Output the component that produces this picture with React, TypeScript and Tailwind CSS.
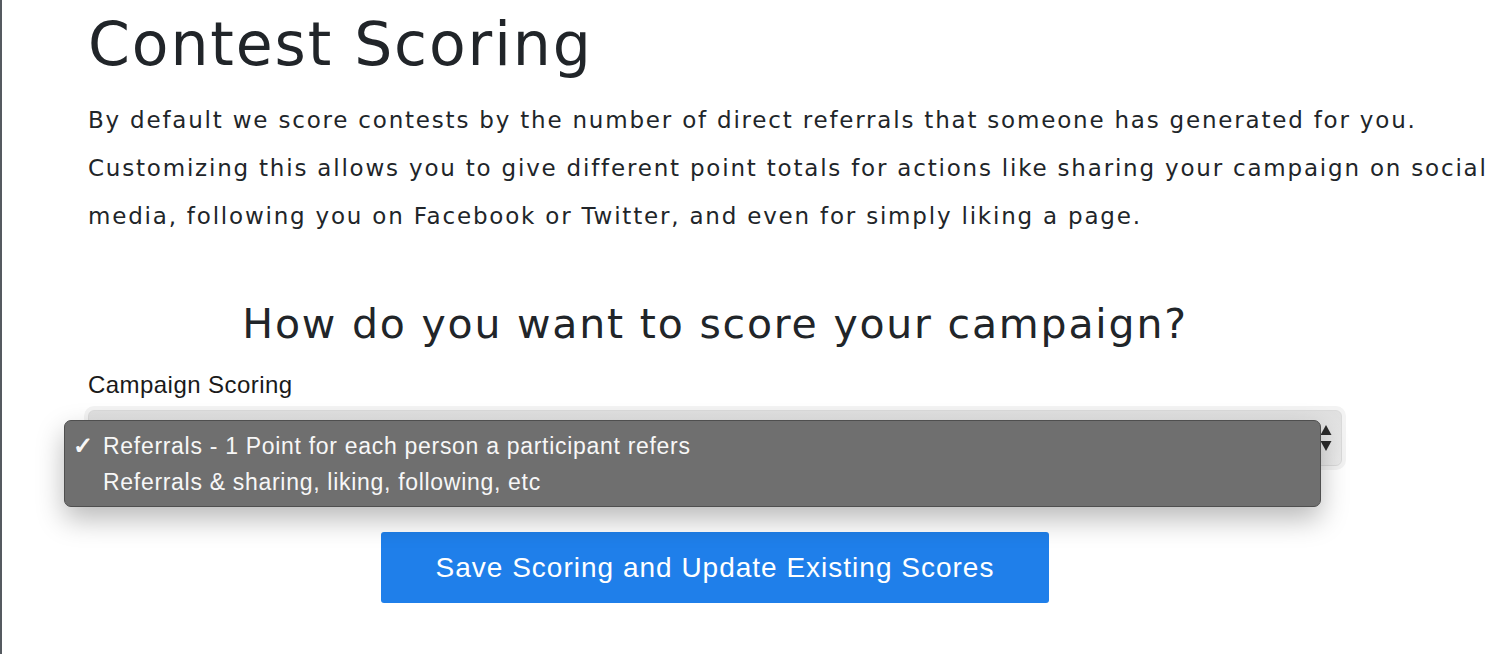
import * as React from 'react';

const options = [
  {label: 'Referrals - 1 Point for each person a participant refers', checked: true},
  {label: 'Referrals & sharing, liking, following, etc', checked: false},
];

function SelectArrows() {
  return (
    <svg width="12" height="28" viewBox="0 0 12 28" className="text-[#2b2b2b]">
      <path d="M6 1 L11.5 11 L0.5 11 Z" fill="currentColor"/>
      <path d="M6 27 L11.5 17 L0.5 17 Z" fill="currentColor"/>
    </svg>
  );
}

export default function App() {
  return (
    <div className="min-h-[654px] w-full bg-white border-l-2 border-[#555a60] overflow-hidden">
      <div className="pl-[86px]">
        <h1
          className="mt-[8px] text-[60px] leading-[72px] tracking-[1.9px] text-[#212529] font-['DejaVu_Sans',sans-serif]">
          Contest Scoring
        </h1>
        <p className="mt-[16px] text-[23px] leading-[48px] tracking-[1.8px] text-[#212529] font-['DejaVu_Sans',sans-serif] whitespace-nowrap">
          <span className="block">By default we score contests by the number of direct referrals that someone has generated for you.</span>
          <span className="block">Customizing this allows you to give different point totals for actions like sharing your campaign on social</span>
          <span className="block">media, following you on Facebook or Twitter, and even for simply liking a page.</span>
        </p>

        <div className="w-[1254px]">
          <h2 className="mt-[60px] text-center text-[41px] leading-[48px] tracking-[1.8px] text-[#212529] font-['DejaVu_Sans',sans-serif]">
            How do you want to score your campaign?
          </h2>
          <label className="block mt-[19px] text-[24px] leading-[36px] tracking-[0.45px] text-[#1a1a1a] font-['Liberation_Sans',Arial,sans-serif]">
            Campaign Scoring
          </label>

          <div className="relative mt-[7px] h-[56px] rounded-[6px] bg-gradient-to-b from-[#e0e0e0] to-[#ebebeb] border border-[#dadada] ring-4 ring-[#f3f3f3] flex items-center justify-end pr-[9px]">
            <SelectArrows/>
            <div
              className="absolute left-[-25px] top-[9px] w-[1257px] rounded-[7px] bg-[#6f6f6f] border border-[#4f4f4f] shadow-[0_12px_28px_rgba(0,0,0,0.28)] pt-[7px] pb-[6px] font-['Liberation_Sans',Arial,sans-serif] text-[#f7f7f7]">
              {options.map(o => (
                <div key={o.label} className="flex items-center h-[36px] text-[23px] tracking-[0.7px]">
                  <span className="w-[38px] pl-[8px] text-[24px] font-bold leading-none">{o.checked ? '✓' : ''}</span>
                  <span>{o.label}</span>
                </div>
              ))}
            </div>
          </div>

          <div className="flex justify-center mt-[66px]">
            <button
              className="w-[668px] h-[71px] rounded-[3px] bg-[#1f7fea] text-white text-[28px] tracking-[1px] font-['Liberation_Sans',Arial,sans-serif]">
              Save Scoring and Update Existing Scores
            </button>
          </div>
        </div>
      </div>
    </div>
  );
}
